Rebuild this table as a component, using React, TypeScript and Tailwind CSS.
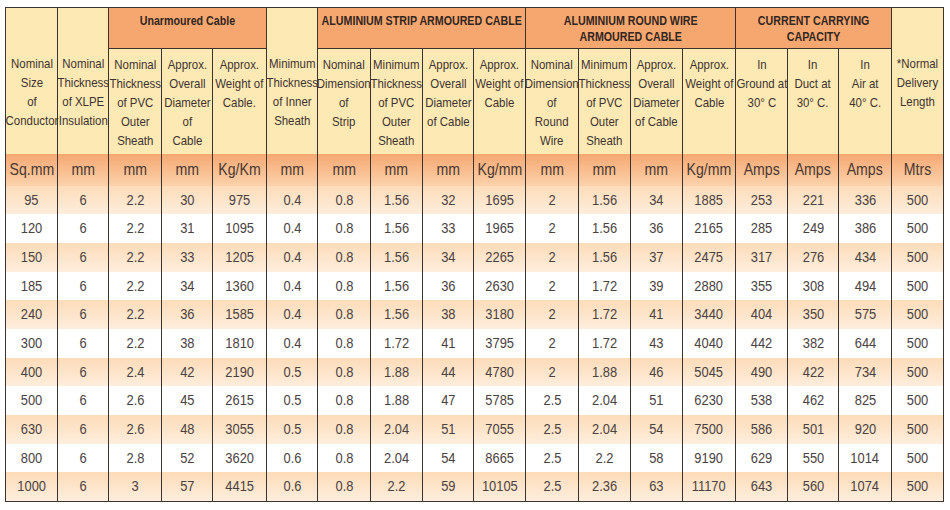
import type { ReactNode } from "react";

const widths = [52, 51, 53, 51, 54, 51, 53, 52, 51, 52, 53, 52, 52, 53, 52, 51, 53, 52];

const heads: string[][] = [
  ["Nominal", "Size", "of", "Conductor"],
  ["Nominal", "Thickness", "of XLPE", "Insulation"],
  ["Nominal", "Thickness", "of PVC", "Outer", "Sheath"],
  ["Approx.", "Overall", "Diameter", "of", "Cable"],
  ["Approx.", "Weight of", "Cable."],
  ["Minimum", "Thickness", "of Inner", "Sheath"],
  ["Nominal", "Dimension", "of", "Strip"],
  ["Minimum", "Thickness", "of PVC", "Outer", "Sheath"],
  ["Approx.", "Overall", "Diameter", "of Cable"],
  ["Approx.", "Weight of", "Cable"],
  ["Nominal", "Dimension", "of", "Round", "Wire"],
  ["Minimum", "Thickness", "of PVC", "Outer", "Sheath"],
  ["Approx.", "Overall", "Diameter", "of Cable"],
  ["Approx.", "Weight of", "Cable"],
  ["In", "Ground at", "30° C"],
  ["In", "Duct at", "30° C."],
  ["In", "Air at", "40° C."],
  ["*Normal", "Delivery", "Length"],
];

const units = ["Sq.mm", "mm", "mm", "mm", "Kg/Km", "mm", "mm", "mm", "mm", "Kg/mm", "mm", "mm", "mm", "Kg/mm", "Amps", "Amps", "Amps", "Mtrs"];

const rows = [
  "95 6 2.2 30 975 0.4 0.8 1.56 32 1695 2 1.56 34 1885 253 221 336 500",
  "120 6 2.2 31 1095 0.4 0.8 1.56 33 1965 2 1.56 36 2165 285 249 386 500",
  "150 6 2.2 33 1205 0.4 0.8 1.56 34 2265 2 1.56 37 2475 317 276 434 500",
  "185 6 2.2 34 1360 0.4 0.8 1.56 36 2630 2 1.72 39 2880 355 308 494 500",
  "240 6 2.2 36 1585 0.4 0.8 1.56 38 3180 2 1.72 41 3440 404 350 575 500",
  "300 6 2.2 38 1810 0.4 0.8 1.72 41 3795 2 1.72 43 4040 442 382 644 500",
  "400 6 2.4 42 2190 0.5 0.8 1.88 44 4780 2 1.88 46 5045 490 422 734 500",
  "500 6 2.6 45 2615 0.5 0.8 1.88 47 5785 2.5 2.04 51 6230 538 462 825 500",
  "630 6 2.6 48 3055 0.5 0.8 2.04 51 7055 2.5 2.04 54 7500 586 501 920 500",
  "800 6 2.8 52 3620 0.6 0.8 2.04 54 8665 2.5 2.2 58 9190 629 550 1014 500",
  "1000 6 3 57 4415 0.6 0.8 2.2 59 10105 2.5 2.36 63 11170 643 560 1074 500",
].map((r) => r.split(" "));

// top header row; a group without lines spans both header rows
const groups: { span: number; lines?: string[] }[] = [
  { span: 1 },
  { span: 1 },
  { span: 3, lines: ["Unarmoured Cable"] },
  { span: 1 },
  { span: 4, lines: ["ALUMINIUM STRIP ARMOURED CABLE"] },
  { span: 4, lines: ["ALUMINIUM ROUND WIRE", "ARMOURED CABLE"] },
  { span: 3, lines: ["CURRENT CARRYING", "CAPACITY"] },
  { span: 1 },
];

// condensed look: no narrow font installed, so squeeze the text horizontally
function Narrow({ children, className }: { children: ReactNode; className: string }) {
  return (
    <div className="flex justify-center">
      <div className={"whitespace-nowrap text-center " + className}>{children}</div>
    </div>
  );
}

function HeadText({ lines }: { lines: string[] }) {
  return (
    <Narrow className="text-[13px] leading-[19px] scale-x-[0.88]">
      {lines.map((l, i) => (
        <div key={i}>{l}</div>
      ))}
    </Narrow>
  );
}

export default function App() {
  let col = 0;
  const spanned: number[] = [];
  groups.forEach((g) => {
    if (!g.lines) spanned.push(col);
    col += g.span;
  });

  return (
    <div className="w-[950px] h-[510px] bg-white pt-[7px] pl-[5px] font-['Liberation_Sans',Arial,sans-serif] text-[#3d3431]">
      <table className="w-[939px] table-fixed border-collapse border-[1.5px] border-[#3a3330] text-center">
        <colgroup>
          {widths.map((w, i) => (
            <col key={i} style={{ width: w }} />
          ))}
        </colgroup>
        <thead>
          <tr className="h-[41px]">
            {(() => {
              let c = 0;
              return groups.map((g, i) => {
                const start = c;
                c += g.span;
                if (!g.lines) {
                  return (
                    <th key={i} rowSpan={2} className="bg-[#fde9b3] border-x border-[#3a3330] align-top pt-[46px] px-0 pb-0 font-normal">
                      <HeadText lines={heads[start]} />
                    </th>
                  );
                }
                return (
                  <th key={i} colSpan={g.span} className="bg-[#f5a76f] border border-[#3a3330] align-top pt-[5px] px-0 pb-0 font-bold text-[#33261f]">
                    <Narrow className="text-[13.5px] leading-[16px] scale-x-[0.79]">
                      {g.lines.map((l, j) => (
                        <div key={j}>{l}</div>
                      ))}
                    </Narrow>
                  </th>
                );
              });
            })()}
          </tr>
          <tr className="h-[105px]">
            {heads.map((h, i) =>
              spanned.includes(i) ? null : (
                <th key={i} className="bg-[#fde9b3] border-x border-[#3a3330] align-top pt-[6px] px-0 pb-0 font-normal">
                  <HeadText lines={h} />
                </th>
              )
            )}
          </tr>
        </thead>
        <tbody className="text-[#4a4240]">
          <tr className="h-[32px] bg-linear-to-b from-[#f5a872] to-[#fcd2ab]">
            {units.map((u, i) => (
              <td key={i} className="border-x border-[#3a3330] p-0 text-[#4a3a33]">
                <Narrow className="text-[17px] scale-x-[0.83]">{u}</Narrow>
              </td>
            ))}
          </tr>
          {rows.map((r, ri) => (
            <tr key={ri} className={ri % 2 === 0 ? "h-[28.7px] bg-linear-to-b from-[#fddcb9] to-[#feeedd]" : "h-[28.7px] bg-white"}>
              {r.map((v, i) => (
                <td key={i} className="border-x border-[#3a3330] p-0">
                  <Narrow className="text-[15px] scale-x-[0.86]">{v}</Narrow>
                </td>
              ))}
            </tr>
          ))}
        </tbody>
      </table>
    </div>
  );
}
